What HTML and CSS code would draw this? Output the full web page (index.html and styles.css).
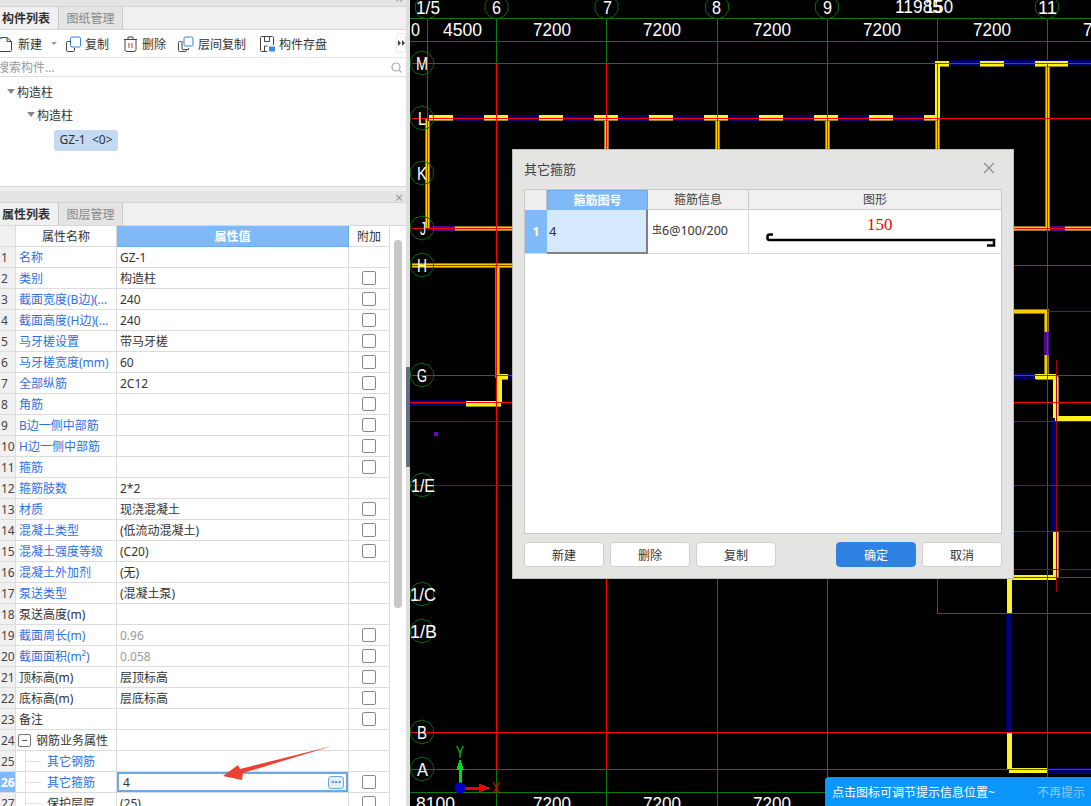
FILE: index.html
```html
<!DOCTYPE html>
<html lang="zh-CN">
<head>
    <meta charset="UTF-8">
    <meta name="viewport" content="width=device-width, initial-scale=1.0">
    <title>构件列表</title>
    <link rel="stylesheet" href="styles.css">
</head>
<body>
    <div class="app">
        <aside class="side">
            <!-- component list -->
            <section class="panel list-panel">
                <div class="panel-strip"><span class="strip-close">×</span></div>
                <div class="tabs">
                    <div class="tab active">构件列表</div>
                    <div class="tab">图纸管理</div>
                </div>
                <div class="toolbar">
                    <div class="tool tool-new">
                        <svg class="tool-icon" width="14" height="16" viewBox="0 0 14 16"><path class="ico" d="M1 1.500h7l4.500 4v9a1 1 0 0 1-1 1H1"/><path class="ico" d="M8 1.500v4h4.500"/><path class="ico-blue" d="M0 1h3v2H0z"/></svg>
                        <span>新建</span>
                        <span class="tool-caret"></span>
                    </div>
                    <div class="tool tool-copy">
                        <svg class="tool-icon" width="15" height="16" viewBox="0 0 15 16"><path class="ico" d="M4 5.500H1.500a1 1 0 0 0-1 1v8a1 1 0 0 0 1 1h6a1 1 0 0 0 1-1V12"/><rect class="ico-line-blue" x="4.500" y="1" width="10" height="10" rx="1.500"/></svg>
                        <span>复制</span>
                    </div>
                    <div class="tool tool-del">
                        <svg class="tool-icon" width="13" height="16" viewBox="0 0 13 16"><path class="ico" d="M0 3.500h13M4 3V1h5v2M1 3.500v10a2 2 0 0 0 2 2h7a2 2 0 0 0 2-2v-10"/><path class="ico-red" d="M5 7v5M8 7v5"/></svg>
                        <span>删除</span>
                    </div>
                    <div class="tool tool-floor">
                        <svg class="tool-icon" width="16" height="16" viewBox="0 0 16 16"><path class="ico" d="M3 5.500H1.500a1 1 0 0 0-1 1v8a1 1 0 0 0 1 1h6a1 1 0 0 0 1-1V14"/><path class="ico" d="M4 5v8a.5.500 0 0 0 .5.500h6V12"/><rect class="ico-line-blue" x="6" y="1" width="9" height="9" rx="1.500"/></svg>
                        <span>层间复制</span>
                    </div>
                    <div class="tool tool-save">
                        <svg class="tool-icon" width="15" height="16" viewBox="0 0 15 16"><path class="ico" d="M7 15.500H1.500a1 1 0 0 1-1-1v-13a1 1 0 0 1 1-1h11a1 1 0 0 1 1 1V9"/><path class="ico" d="M4.500 1v4.500h5V1M4.500 15V10h3"/><rect class="ico-blue" x="9" y="10.500" width="6" height="5"/></svg>
                        <span>构件存盘</span>
                    </div>
                    <div class="tool-more"><span class="more-arrow"></span><span class="more-arrow"></span></div>
                </div>
                <div class="search">
                    <span class="search-text">搜索构件...</span>
                    <svg width="11" height="11" viewBox="0 0 11 11"><circle class="search-ring" cx="5" cy="5" r="4"/><path class="search-ring" d="M8 8l2.500 2.500"/></svg>
                </div>
                <div class="tree">
                    <div class="tree-row level-1"><span class="tree-caret"></span>构造柱</div>
                    <div class="tree-row level-2"><span class="tree-caret"></span>构造柱</div>
                    <div class="tree-chip">GZ-1  &lt;0&gt;</div>
                </div>
            </section>

            <!-- properties -->
            <section class="panel props-panel">
                <div class="panel-strip tall"><span class="strip-close">×</span></div>
                <div class="tabs">
                    <div class="tab active">属性列表</div>
                    <div class="tab">图层管理</div>
                </div>
                <div class="props-body">
                    <table class="props">
                        <colgroup><col class="c-num"><col class="c-name"><col class="c-val"><col class="c-add"></colgroup>
                        <thead>
                            <tr><th></th><th>属性名称</th><th class="sel">属性值</th><th>附加</th></tr>
                        </thead>
                        <tbody>
                            <tr><td class="num">1</td><td class="link">名称</td><td>GZ-1</td><td></td></tr>
                            <tr><td class="num">2</td><td class="link">类别</td><td>构造柱</td><td><i class="box"></i></td></tr>
                            <tr><td class="num">3</td><td class="link">截面宽度(B边)(...</td><td>240</td><td><i class="box"></i></td></tr>
                            <tr><td class="num">4</td><td class="link">截面高度(H边)(...</td><td>240</td><td><i class="box"></i></td></tr>
                            <tr><td class="num">5</td><td class="link">马牙槎设置</td><td>带马牙槎</td><td><i class="box"></i></td></tr>
                            <tr><td class="num">6</td><td class="link">马牙槎宽度(mm)</td><td>60</td><td><i class="box"></i></td></tr>
                            <tr><td class="num">7</td><td class="link">全部纵筋</td><td>2C12</td><td><i class="box"></i></td></tr>
                            <tr><td class="num">8</td><td class="link">角筋</td><td></td><td><i class="box"></i></td></tr>
                            <tr><td class="num">9</td><td class="link">B边一侧中部筋</td><td></td><td><i class="box"></i></td></tr>
                            <tr><td class="num">10</td><td class="link">H边一侧中部筋</td><td></td><td><i class="box"></i></td></tr>
                            <tr><td class="num">11</td><td class="link">箍筋</td><td></td><td><i class="box"></i></td></tr>
                            <tr><td class="num">12</td><td class="link">箍筋肢数</td><td>2*2</td><td></td></tr>
                            <tr><td class="num">13</td><td class="link">材质</td><td>现浇混凝土</td><td><i class="box"></i></td></tr>
                            <tr><td class="num">14</td><td class="link">混凝土类型</td><td>(低流动混凝土)</td><td><i class="box"></i></td></tr>
                            <tr><td class="num">15</td><td class="link">混凝土强度等级</td><td>(C20)</td><td><i class="box"></i></td></tr>
                            <tr><td class="num">16</td><td class="link">混凝土外加剂</td><td>(无)</td><td></td></tr>
                            <tr><td class="num">17</td><td class="link">泵送类型</td><td>(混凝土泵)</td><td></td></tr>
                            <tr><td class="num">18</td><td>泵送高度(m)</td><td></td><td></td></tr>
                            <tr><td class="num">19</td><td class="link">截面周长(m)</td><td class="muted">0.96</td><td><i class="box"></i></td></tr>
                            <tr><td class="num">20</td><td class="link">截面面积(m²)</td><td class="muted">0.058</td><td><i class="box"></i></td></tr>
                            <tr><td class="num">21</td><td>顶标高(m)</td><td>层顶标高</td><td><i class="box"></i></td></tr>
                            <tr><td class="num">22</td><td>底标高(m)</td><td>层底标高</td><td><i class="box"></i></td></tr>
                            <tr><td class="num">23</td><td>备注</td><td></td><td><i class="box"></i></td></tr>
                            <tr><td class="num">24</td><td class="group"><i class="minus"></i>钢筋业务属性</td><td></td><td></td></tr>
                            <tr><td class="num">25</td><td class="link child">其它钢筋</td><td></td><td></td></tr>
                            <tr><td class="num num-sel">26</td><td class="link child">其它箍筋</td><td class="editing"><div class="edit-box">4<span class="edit-btn">···</span></div></td><td><i class="box"></i></td></tr>
                            <tr><td class="num">27</td><td class="child">保护层厚</td><td>(25)</td><td><i class="box"></i></td></tr>
                        </tbody>
                    </table>
                    <div class="scrollbar"><div class="scroll-thumb"></div></div>
                </div>
                <svg class="note-arrow" width="120" height="40" viewBox="220 744 120 40"><path d="M223 776l15-11 2 4 92-23-89 27-1 7z"/></svg>
            </section>
        </aside>

        <div class="splitter"><div class="splitter-handle"></div></div>

        <main class="canvas">
            <svg class="cad" width="681" height="806" viewBox="410 0 681 806">
                <defs>
                    <polygon id="bub" points="0,-12 7,-9.700 11.400,-3.700 11.400,3.700 7,9.700 0,12 -7,9.700 -11.400,3.700 -11.400,-3.700 -7,-9.700"/>
                </defs>

                <!-- axis lines -->
                <path class="axis-green" d="M410 18H1091M410 41H1091M410 792H825M427 18V63M496.500 18V63M606.500 18V63M717 18V63M827 18V63M937 18V63M1047 18V63M496.500 769V806M606.500 769V806M717 769V806M827 769V777"/>

                <!-- walls -->
                <path class="wall-thin-edge" d="M427 118V228M606.500 118V150M717 118V150M827 118V150M937 118V150M1047 63V228M455 228H512M1014 228H1091M412 265H512M497 265V378M1014 311H1046.500V375"/>
                <path class="wall-thin" d="M427 118V228M606.500 118V150M717 118V150M827 118V150M937 118V150M1047 63V228M455 228H512M1014 228H1091M412 265H512M497 265V378M1014 311H1046.500V375"/>
                <path class="wall-purple" d="M432 228.500H455M1050 228.500H1065M1046.500 332V355"/>
                <path class="wall-navy" d="M427 118H937M949 62.500H1091M508 377H512M410 402.500H466M1014 376H1035M1054 419V531M1009 614V731M1047 771H1091"/>
                <path class="wall-olive dash" d="M429 118.500H937"/>
                <path class="wall-yellow dash" d="M429 117.500H937"/>
                <path class="wall-olive" d="M935 64H949M980 64H1004M1035 64H1068M498 377H508M466 404H501M1036 377H1056M1056 377V418M1056 532V577M1055 419H1091"/>
                <path class="wall-yellow" d="M935 63H949M980 63H1004M1035 63H1068M937 63V118M497 376H508M499 378V403M466 403H501M1035 376H1056M1055 376V418M1055 418H1091M1055 531V577M1010 577H1056M1009 579V613M1009 732V770M1009 770H1047"/>

                <!-- red grid -->
                <path class="axis-red" d="M412 63H1091M412 118H1091M412 228H1091M412 265H1091M412 375H1091M410 402H1091M410 732H1091M410 769H1091M427 63V228M496.500 63V769M606.500 63V769M717 63V769M827 63V769M937 63V613M1047 63V777M937 613H1091"/>
                <path class="axis-red-dark" d="M410 421H1091M410 485H1091M1014 531H1091M1014 569H1091M1047 311H1091M1056 360V592"/>
                <path class="axis-red" d="M1014 577H1091"/>
                <rect class="dot" x="434" y="432" width="4" height="4"/>

                <!-- axis bubbles -->
                <g class="bubble">
                    <use href="#bub" x="427" y="7"/><use href="#bub" x="496.500" y="7"/><use href="#bub" x="606.500" y="7"/><use href="#bub" x="717" y="7"/><use href="#bub" x="827" y="7"/><use href="#bub" x="1047" y="7"/>
                    <use href="#bub" x="422" y="63"/><use href="#bub" x="422" y="118"/><use href="#bub" x="422" y="173"/><use href="#bub" x="422" y="228"/><use href="#bub" x="422" y="265"/><use href="#bub" x="422" y="375"/><use href="#bub" x="422" y="485"/><use href="#bub" x="422" y="594"/><use href="#bub" x="422" y="631"/><use href="#bub" x="422" y="732"/><use href="#bub" x="422" y="769"/>
                </g>
                <g class="cad-text">
                    <text x="416" y="14" textLength="24" lengthAdjust="spacingAndGlyphs">1/5</text>
                    <text x="492" y="14" textLength="9" lengthAdjust="spacingAndGlyphs">6</text>
                    <text x="603" y="14" textLength="9" lengthAdjust="spacingAndGlyphs">7</text>
                    <text x="712" y="14" textLength="9" lengthAdjust="spacingAndGlyphs">8</text>
                    <text x="823" y="14" textLength="9" lengthAdjust="spacingAndGlyphs">9</text>
                    <text x="895" y="13" textLength="47" lengthAdjust="spacingAndGlyphs">11985</text>
                    <text x="925" y="13" textLength="28" lengthAdjust="spacingAndGlyphs">150</text>
                    <text x="1038" y="14" textLength="19" lengthAdjust="spacingAndGlyphs">11</text>
                    <text x="411" y="36" textLength="9" lengthAdjust="spacingAndGlyphs">0</text>
                    <text x="443" y="36" textLength="39" lengthAdjust="spacingAndGlyphs">4500</text>
                    <text x="533" y="36" textLength="38" lengthAdjust="spacingAndGlyphs">7200</text>
                    <text x="643" y="36" textLength="38" lengthAdjust="spacingAndGlyphs">7200</text>
                    <text x="753" y="36" textLength="38" lengthAdjust="spacingAndGlyphs">7200</text>
                    <text x="863" y="36" textLength="38" lengthAdjust="spacingAndGlyphs">7200</text>
                    <text x="973" y="36" textLength="38" lengthAdjust="spacingAndGlyphs">7200</text>
                    <text x="1083" y="36" textLength="38" lengthAdjust="spacingAndGlyphs">7200</text>
                    <text x="416" y="70" textLength="12" lengthAdjust="spacingAndGlyphs">M</text>
                    <text x="418" y="125" textLength="8" lengthAdjust="spacingAndGlyphs">L</text>
                    <text x="417" y="180" textLength="10" lengthAdjust="spacingAndGlyphs">K</text>
                    <text x="420" y="235" textLength="6" lengthAdjust="spacingAndGlyphs">J</text>
                    <text x="417" y="272" textLength="10" lengthAdjust="spacingAndGlyphs">H</text>
                    <text x="417" y="382" textLength="10" lengthAdjust="spacingAndGlyphs">G</text>
                    <text x="411" y="492" textLength="24" lengthAdjust="spacingAndGlyphs">1/E</text>
                    <text x="410" y="601" textLength="26" lengthAdjust="spacingAndGlyphs">1/C</text>
                    <text x="410" y="638" textLength="27" lengthAdjust="spacingAndGlyphs">1/B</text>
                    <text x="417" y="739" textLength="10" lengthAdjust="spacingAndGlyphs">B</text>
                    <text x="417" y="776" textLength="11" lengthAdjust="spacingAndGlyphs">A</text>
                    <text x="416" y="810" textLength="39" lengthAdjust="spacingAndGlyphs">8100</text>
                    <text x="533" y="810" textLength="38" lengthAdjust="spacingAndGlyphs">7200</text>
                    <text x="643" y="810" textLength="38" lengthAdjust="spacingAndGlyphs">7200</text>
                    <text x="753" y="810" textLength="38" lengthAdjust="spacingAndGlyphs">7200</text>
                </g>

                <!-- ucs -->
                <path class="ucs-y" d="M458.500 784V770H456L460 759l4 11h-2.500V784z"/>
                <path class="ucs-x" d="M464 786.500h15v-3l11 4.500-11 4.500v-3h-15z"/>
                <circle class="ucs-o" cx="460" cy="788" r="5.500"/>
                <text class="ucs-label green" x="456" y="758" textLength="8" lengthAdjust="spacingAndGlyphs">Y</text>
                <text class="ucs-label red" x="492" y="794" textLength="8" lengthAdjust="spacingAndGlyphs">X</text>
            </svg>

            <!-- dialog -->
            <div class="dialog">
                <div class="dialog-title">
                    <span>其它箍筋</span>
                    <svg width="12" height="12" viewBox="0 0 12 12"><path class="dialog-x" d="M1 1l10 10M11 1L1 11"/></svg>
                </div>
                <div class="grid-wrap">
                    <div class="grid-head">
                        <div class="gh gh-corner"></div>
                        <div class="gh gh-sel">箍筋图号</div>
                        <div class="gh">箍筋信息</div>
                        <div class="gh">图形</div>
                    </div>
                    <div class="grid-row">
                        <div class="gc gc-num">1</div>
                        <div class="gc gc-sel">4</div>
                        <div class="gc gc-info"><span class="rebar">虫</span>6@100/200</div>
                        <div class="gc gc-shape">
                            <span class="shape-len">150</span>
                            <svg class="shape-line" width="232" height="14" viewBox="0 0 232 14"><path d="M7 1.500H3.500Q1.500 1.500 1.500 3.500V5.500Q1.500 7 3.500 7H228V12.500H221"/></svg>
                        </div>
                    </div>
                </div>
                <div class="dialog-btns">
                    <button class="btn">新建</button>
                    <button class="btn">删除</button>
                    <button class="btn">复制</button>
                    <button class="btn btn-primary">确定</button>
                    <button class="btn">取消</button>
                </div>
            </div>

            <div class="tip">
                <span>点击图标可调节提示信息位置~</span>
                <span class="tip-off">不再提示</span>
            </div>
        </main>
    </div>
</body>
</html>
```

FILE: styles.css
```css
* {
    box-sizing: border-box;
}
html, body {
    margin: 0;
    height: 100%;
    overflow: hidden;
}
body {
    font-family: "Noto Sans", "Noto Sans CJK SC", sans-serif;
    font-size: 12px;
    color: #333;
    background: #000;
}
.app {
    display: flex;
    width: 1091px;
    height: 806px;
}

/* left side */
.side {
    width: 406px;
    height: 806px;
    display: flex;
    flex-direction: column;
    background: #f0f0f0;
    overflow: hidden;
}
.panel {
    position: relative;
    background: #fff;
}
.list-panel {
    height: 187px;
    border-bottom: 1px solid #d8d8d8;
    margin-bottom: 4px;
}
.props-panel {
    flex: 1;
    min-height: 0;
    display: flex;
    flex-direction: column;
}
.panel-strip {
    height: 7px;
    background: #e4e4e4;
    border-bottom: 1px solid #d4d4d4;
    position: relative;
    overflow: hidden;
}
.panel-strip.tall {
    height: 12px;
}
.strip-close {
    position: absolute;
    right: 3px;
    bottom: -3px;
    color: #999;
    font-size: 14px;
    line-height: 14px;
}
.list-panel .strip-close {
    bottom: 0;
}
.tabs {
    display: flex;
    height: 23px;
    background: #f0f0f0;
    border-bottom: 1px solid #d8d8d8;
}
.tab {
    width: 65px;
    line-height: 24px;
    text-align: center;
    color: #888;
    background: #e4e4e4;
    border-right: 1px solid #c8c8c8;
    border-left: 1px solid #c8c8c8;
    font-size: 12px;
}
.tab.active {
    width: 58px;
    padding-left: 2px;
    text-align: left;
    color: #333;
    font-weight: 700;
    background: #f0f0f0;
    border: 0;
}

/* toolbar */
.toolbar {
    display: flex;
    align-items: center;
    height: 28px;
    border-bottom: 1px solid #e4e4e4;
    position: relative;
}
.tool {
    display: flex;
    align-items: center;
    gap: 5px;
    color: #333;
}
.tool-new { margin-left: -1px; width: 67px; }
.tool-copy { width: 57px; gap: 4px; }
.tool-del { width: 55px; margin-left: 1px; }
.tool-floor { width: 82px; gap: 4px; margin-left: -1px; }
.tool-save { gap: 4px; }
.tool-caret {
    margin-left: 4px;
    border: 3px solid transparent;
    border-top: 3px solid #999;
    border-bottom: 0;
}
.tool-icon {
    flex: none;
}
.ico {
    fill: none;
    stroke: #444;
    stroke-width: 1;
}
.ico-blue {
    fill: #3a8ee6;
}
.ico-line-blue {
    fill: #fff;
    stroke: #2d7fe0;
    stroke-width: 1;
}
.ico-red {
    fill: none;
    stroke: #c0392b;
    stroke-width: 1;
}
.tool-more {
    position: absolute;
    right: 0;
    top: 3px;
    width: 10px;
    height: 20px;
    display: flex;
    align-items: center;
    justify-content: center;
    gap: 1px;
    border: 1px solid #e8e8e8;
    border-radius: 3px;
}
.more-arrow {
    border: 3px solid transparent;
    border-left: 3px solid #444;
    border-right: 0;
}
.search {
    display: flex;
    align-items: center;
    justify-content: space-between;
    height: 19px;
    padding-right: 4px;
    border-bottom: 1px solid #e0e0e0;
    color: #999;
}
.search-text {
    margin-left: -3px;
}
.search-ring {
    fill: none;
    stroke: #aaa;
    stroke-width: 1.200;
}

/* tree */
.tree {
    padding-top: 3px;
}
.tree-row {
    height: 23px;
    display: flex;
    align-items: center;
    gap: 2px;
    font-size: 12px;
}
.level-1 { padding-left: 7px; }
.level-2 { padding-left: 27px; }
.tree-caret {
    border: 4px solid transparent;
    border-top: 5px solid #888;
    border-bottom: 0;
}
.tree-chip {
    width: 64px;
    height: 21px;
    margin: 4px 0 0 54px;
    line-height: 20px;
    text-align: center;
    background: #c3daf2;
    border-radius: 3px;
    white-space: pre;
}

/* properties table */
.props-body {
    flex: 1;
    min-height: 0;
    display: flex;
    overflow: hidden;
}
.props {
    width: 390px;
    flex: none;
    table-layout: fixed;
    border-collapse: separate;
    border-spacing: 0;
    align-self: flex-start;
}
.c-num { width: 16px; }
.c-name { width: 101px; }
.c-val { width: 232px; }
.c-add { width: 41px; }
.props th {
    height: 21px;
    padding: 0;
    font-weight: 400;
    border-right: 1px solid #dcdcdc;
    border-bottom: 1px solid #dcdcdc;
    background: #fff;
    color: #333;
}
.props th:first-child {
    background: #f0f0f0;
}
.props th.sel {
    background: #7fb9f8;
    color: #fff;
    border-color: #6aa9ec;
    font-weight: 700;
}
.props td {
    height: 21px;
    padding: 2px 3px 0;
    border-right: 1px solid #dcdcdc;
    border-bottom: 1px solid #dcdcdc;
    line-height: 18px;
    white-space: nowrap;
    overflow: hidden;
    position: relative;
}
.props td.num {
    padding: 2px 0 0 1px;
    background: #f0f0f0;
    color: #444;
}
.props td.num-sel {
    background: #7fb9f8;
    color: #fff;
    font-weight: 700;
}
.props td.link {
    color: #2f6fe4;
}
.props td.muted {
    color: #999;
}
.props td.group {
    padding-left: 2px;
}
.props td.child {
    padding-left: 31px;
}
.props td.child::before {
    content: "";
    position: absolute;
    left: 9px;
    top: -1px;
    bottom: 0;
    border-left: 1px solid #e2e2e2;
}
.props td.child::after {
    content: "";
    position: absolute;
    left: 9px;
    top: 10px;
    width: 16px;
    border-top: 1px solid #e2e2e2;
}
.minus {
    display: inline-block;
    position: relative;
    width: 13px;
    height: 13px;
    margin-right: 5px;
    vertical-align: -2px;
    border: 1px solid #777;
    border-radius: 2px;
}
.minus::after {
    content: "";
    position: absolute;
    left: 3px;
    top: 5px;
    width: 5px;
    border-top: 1px solid #555;
}
.box {
    display: block;
    width: 14px;
    height: 14px;
    margin: -2px 0 0 10px;
    border: 1px solid #888;
    border-radius: 2px;
    background: #fff;
}
.props td.editing {
    padding: 0;
}
.edit-box {
    height: 20px;
    display: flex;
    align-items: center;
    justify-content: space-between;
    padding: 1px 2px 0 4px;
    border: 2px solid #6aa9e6;
}
.edit-btn {
    width: 16px;
    height: 13px;
    line-height: 10px;
    text-align: center;
    font-weight: 700;
    color: #3f86d8;
    background: #e4effb;
    border: 1px solid #6aa9e6;
    border-radius: 3px;
}
.scrollbar {
    flex: 1;
    padding: 14px 4px 0;
    background: #fff;
}
.scroll-thumb {
    width: 8px;
    height: 368px;
    background: #c8c8c8;
    border-radius: 4px;
}
.note-arrow {
    position: absolute;
    left: 220px;
    top: 553px;
}
.note-arrow path {
    fill: #ee3f34;
}

/* splitter */
.splitter {
    width: 4px;
    height: 806px;
    background: #dedede;
    padding-top: 367px;
}
.splitter-handle {
    height: 100px;
    background: #667080;
}

/* cad canvas */
.canvas {
    position: relative;
    flex: 1;
    height: 806px;
    background: #000;
    overflow: hidden;
}
.cad {
    display: block;
}
.cad path {
    shape-rendering: crispEdges;
}
.axis-green {
    fill: none;
    stroke: #0a7a0a;
    stroke-width: 1;
}
.axis-red {
    fill: none;
    stroke: #ff0000;
    stroke-width: 1;
}
.axis-red-dark {
    fill: none;
    stroke: #aa0000;
    stroke-width: 1;
}
.wall-thin-edge {
    fill: none;
    stroke: #8c7c10;
    stroke-width: 5;
}
.wall-thin {
    fill: none;
    stroke: #ffc800;
    stroke-width: 3;
}
.wall-purple {
    fill: none;
    stroke: #4a0a8a;
    stroke-width: 5;
}
.wall-navy {
    fill: none;
    stroke: #00006e;
    stroke-width: 6;
}
.wall-olive {
    fill: none;
    stroke: #8f8518;
    stroke-width: 5;
}
.wall-olive.dash {
    stroke-dasharray: 24 31;
}
.wall-yellow {
    fill: none;
    stroke: #fff21e;
    stroke-width: 5;
}
.wall-yellow.dash {
    stroke-dasharray: 24 31;
}
.dot {
    fill: #6a00c8;
}
.bubble use {
    fill: none;
    stroke: #0a6a0a;
    stroke-width: 1;
}
.cad-text text {
    font-family: "Liberation Sans", sans-serif;
    font-size: 19px;
    fill: #fff;
}
.ucs-y { fill: #00e000; }
.ucs-x { fill: #f00000; }
.ucs-o { fill: #0000c0; }
.ucs-label {
    font-family: "Liberation Sans", sans-serif;
    font-size: 16px;
}
.ucs-label.green { fill: #00d000; }
.ucs-label.red { fill: #e00000; }

/* dialog */
.dialog {
    position: absolute;
    left: 102px;
    top: 149px;
    width: 502px;
    height: 430px;
    padding: 0 11px;
    background: #e4e4e3;
    border: 1px solid #bdbdbd;
}
.dialog-title {
    display: flex;
    align-items: center;
    justify-content: space-between;
    height: 39px;
    padding: 0 7px 3px 0;
    font-size: 13px;
    color: #444;
}
.dialog-x {
    fill: none;
    stroke: #8c8c8c;
    stroke-width: 1.200;
}
.grid-wrap {
    height: 345px;
    background: #fff;
    border: 1px solid #c8c8c8;
}
.grid-head {
    display: grid;
    grid-template-columns: 22px 101px 101px 1fr;
    height: 20px;
    background: #f0f0f0;
    border-bottom: 1px solid #c8c8c8;
}
.gh {
    line-height: 19px;
    text-align: center;
    border-right: 1px solid #c8c8c8;
    color: #444;
}
.gh:last-child {
    border-right: 0;
}
.gh-corner {
    background: #eee;
}
.gh-sel {
    background: #7fb9f8;
    color: #fff;
    font-weight: 700;
    border: 1px solid #6aa9ec;
}
.grid-row {
    display: grid;
    grid-template-columns: 22px 101px 101px 1fr;
    height: 44px;
    border-bottom: 1px solid #d8d8d8;
}
.gc {
    display: flex;
    align-items: center;
    border-right: 1px solid #d8d8d8;
}
.gc-num {
    justify-content: center;
    background: #7fb9f8;
    color: #fff;
    font-weight: 700;
    border-right: 0;
}
.gc-sel {
    padding-left: 2px;
    background: #d5e9fd;
    border-bottom: 2px solid #808080;
    border-right: 2px solid #808080;
    margin-bottom: -1px;
    font-size: 13px;
}
.gc-info {
    padding: 0 0 0 4px;
    margin-top: -2px;
    font-size: 12.500px;
}
.rebar {
    font-size: 10px;
    margin-top: -4px;
}
.gc-shape {
    position: relative;
    border-right: 0;
}
.shape-len {
    position: absolute;
    left: 118px;
    top: 5px;
    font-family: "Liberation Serif", serif;
    font-size: 17px;
    color: #f00000;
}
.shape-line {
    position: absolute;
    left: 17px;
    top: 23px;
}
.shape-line path {
    fill: none;
    stroke: #000;
    stroke-width: 2.500;
}
.dialog-btns {
    display: flex;
    gap: 6px;
    margin-top: 8px;
}
.btn {
    width: 80px;
    height: 25px;
    padding: 0;
    font: inherit;
    color: #333;
    background: #fff;
    border: 1px solid #cfcfcf;
    border-radius: 4px;
}
.btn-primary {
    margin-left: 54px;
    color: #fff;
    background: #2d82e2;
    border-color: #2d82e2;
}

/* tip */
.tip {
    position: absolute;
    left: 415px;
    top: 777px;
    width: 266px;
    height: 29px;
    display: flex;
    align-items: center;
    justify-content: space-between;
    padding: 0 6px 0 7px;
    color: #fff;
    background: #0a96fb;
    border-radius: 4px 0 0 0;
}
.tip-off {
    color: #8cc8f5;
}
```
